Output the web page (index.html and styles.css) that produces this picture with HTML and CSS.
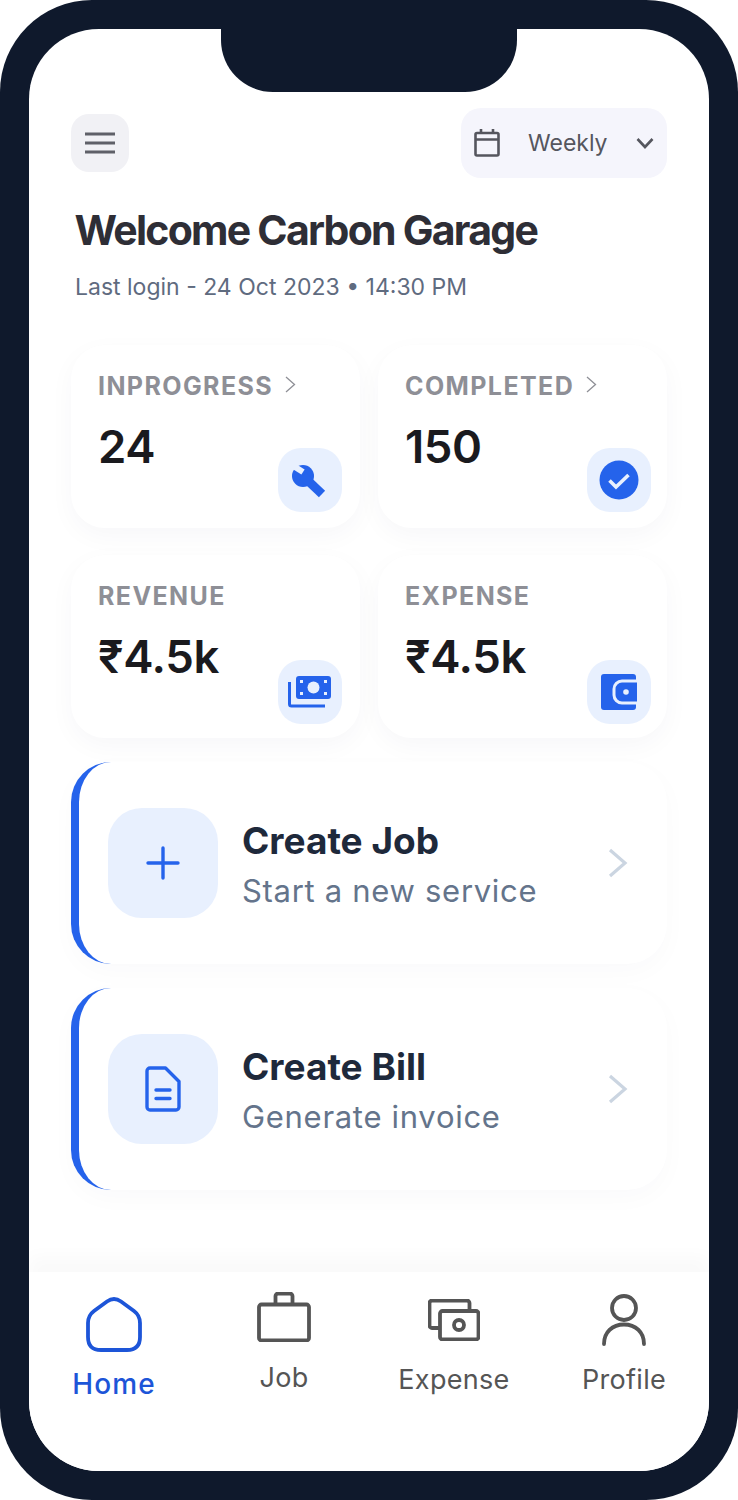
FILE: index.html
```html
<!DOCTYPE html>
<html lang="en">
<head>
    <meta charset="UTF-8">
    <meta name="viewport" content="width=device-width, initial-scale=1.0">
    <title>Carbon Garage</title>
    <link rel="stylesheet" href="styles.css">
</head>
<body>
    <div class="phone">
        <div class="notch"></div>
        <div class="screen">
            <main class="content">
                <div class="topbar">
                    <button class="menu-btn">
                        <svg width="32" height="24" viewBox="0 0 32 24"><path d="M1 3h30M1 12h30M1 21h30" fill="none" stroke="#5f6068" stroke-width="3.200"/></svg>
                    </button>
                    <div class="range-select">
                        <svg width="26" height="28" viewBox="0 0 26 28" fill="none" stroke="#55565e" stroke-width="2.600"><rect x="1.500" y="4" width="23" height="22.500" rx="1.500"/><path d="M1.500 10.500h23M7 0v5M19 0v5"/></svg>
                        <span class="range-label">Weekly</span>
                        <svg width="18" height="12" viewBox="0 0 18 12" fill="none" stroke="#55565e" stroke-width="2.600"><path d="M1.500 2l7.500 8 7.500-8"/></svg>
                    </div>
                </div>

                <h1 class="welcome">Welcome Carbon Garage</h1>
                <p class="last-login">Last login - 24 Oct 2023 • 14:30 PM</p>

                <div class="stats">
                    <div class="stat-card">
                        <div class="stat-label">INPROGRESS
                            <svg class="stat-arrow" width="11" height="17" viewBox="0 0 11 17" fill="none" stroke="#8e8f96" stroke-width="1.300"><path d="M1 1l8.500 7.500L1 16"/></svg>
                        </div>
                        <div class="stat-value">24</div>
                        <div class="stat-icon">
                            <svg width="38" height="38" viewBox="0 0 38 38"><circle cx="12" cy="15" r="11" fill="#2563eb"/><path d="M12 15l19 18" stroke="#2563eb" stroke-width="9"/><path d="M1 4l11 7" stroke="#e8f0fe" stroke-width="6"/></svg>
                        </div>
                    </div>
                    <div class="stat-card">
                        <div class="stat-label">COMPLETED
                            <svg class="stat-arrow" width="11" height="17" viewBox="0 0 11 17" fill="none" stroke="#8e8f96" stroke-width="1.300"><path d="M1 1l8.500 7.500L1 16"/></svg>
                        </div>
                        <div class="stat-value">150</div>
                        <div class="stat-icon">
                            <svg width="40" height="40" viewBox="0 0 40 40"><circle cx="20" cy="20" r="19.500" fill="#2563eb"/><path d="M10.500 20.500l6.500 6.500 12.500-12" fill="none" stroke="#e8f0fe" stroke-width="3.600"/></svg>
                        </div>
                    </div>
                    <div class="stat-card">
                        <div class="stat-label">REVENUE</div>
                        <div class="stat-value">₹4.5k</div>
                        <div class="stat-icon">
                            <svg width="44" height="32" viewBox="0 0 44 32"><rect x="8" y="0" width="35" height="23" rx="3" fill="#2563eb"/><circle cx="25.500" cy="11.500" r="6" fill="#e8f0fe"/><path d="M12 4h3v3h-3zM36 4h3v3h-3zM12 16h3v3h-3zM36 16h3v3h-3z" fill="#e8f0fe"/><path d="M1.500 6v22a2 2 0 0 0 2 2h33.500" fill="none" stroke="#2563eb" stroke-width="3"/></svg>
                        </div>
                    </div>
                    <div class="stat-card">
                        <div class="stat-label">EXPENSE</div>
                        <div class="stat-value">₹4.5k</div>
                        <div class="stat-icon">
                            <svg width="36" height="36" viewBox="0 0 36 36"><rect x="0" y="0" width="35" height="36" rx="3" fill="#2563eb"/><path d="M36 7H21a8 8 0 0 0-8 8v6a8 8 0 0 0 8 8h15" fill="#2563eb" stroke="#e8f0fe" stroke-width="3"/><circle cx="25" cy="18" r="2.800" fill="#e8f0fe"/></svg>
                        </div>
                    </div>
                </div>

                <div class="action-card">
                    <div class="action-icon">
                        <svg width="34" height="34" viewBox="0 0 34 34" fill="none" stroke="#2563eb" stroke-width="3.400" stroke-linecap="round"><path d="M17 2v30M2 17h30"/></svg>
                    </div>
                    <div class="action-text">
                        <div class="action-title">Create Job</div>
                        <div class="action-sub">Start a new service</div>
                    </div>
                    <svg class="action-arrow" width="20" height="30" viewBox="0 0 20 30" fill="none" stroke="#cbd5e1" stroke-width="3.200"><path d="M2 2l15 13L2 28"/></svg>
                </div>

                <div class="action-card">
                    <div class="action-icon">
                        <svg width="36" height="46" viewBox="0 0 36 46" fill="none" stroke="#2563eb" stroke-width="3.400" stroke-linecap="round" stroke-linejoin="round"><path d="M5 2h15.500L34 15.500V41a3 3 0 0 1-3 3H5a3 3 0 0 1-3-3V5a3 3 0 0 1 3-3z"/><path d="M11 24h14M11 32.500h14"/></svg>
                    </div>
                    <div class="action-text">
                        <div class="action-title">Create Bill</div>
                        <div class="action-sub">Generate invoice</div>
                    </div>
                    <svg class="action-arrow" width="20" height="30" viewBox="0 0 20 30" fill="none" stroke="#cbd5e1" stroke-width="3.200"><path d="M2 2l15 13L2 28"/></svg>
                </div>
            </main>

            <nav class="tabbar">
                <div class="tab tab-home active">
                    <svg width="56" height="56" viewBox="0 0 56 56" fill="none" stroke="#1d55d8" stroke-width="3.800"><path d="M21 5.500Q28 .5 35 5.500L48 15Q54 19.500 54 27V41Q54 54 41 54H15Q2 54 2 41V27Q2 19.500 8 15Z"/></svg>
                    <span>Home</span>
                </div>
                <div class="tab tab-job">
                    <svg width="54" height="50" viewBox="0 0 54 50" fill="none" stroke="#555" stroke-width="3.800" stroke-linejoin="round"><rect x="2" y="12.500" width="50" height="36" rx="2.500"/><path d="M18.500 12V4a2.500 2.500 0 0 1 2.500-2.500h12A2.500 2.500 0 0 1 35.500 4v8"/></svg>
                    <span>Job</span>
                </div>
                <div class="tab tab-expense">
                    <svg width="52" height="42" viewBox="0 0 52 42" fill="none" stroke="#555" stroke-width="3.800" stroke-linejoin="round"><path d="M12 29H4a2.500 2.500 0 0 1-2.500-2.500V4A2.500 2.500 0 0 1 4 1.500h35A2.500 2.500 0 0 1 41.500 4v8"/><rect x="12" y="12" width="38.500" height="28.500" rx="2.500"/><circle cx="31" cy="26" r="5"/></svg>
                    <span>Expense</span>
                </div>
                <div class="tab tab-profile">
                    <svg width="46" height="52" viewBox="0 0 46 52" fill="none" stroke="#555" stroke-width="3.800" stroke-linecap="round"><circle cx="23" cy="14" r="12"/><path d="M3 50c0-12 8.500-19.500 20-19.500S43 38 43 50"/></svg>
                    <span>Profile</span>
                </div>
            </nav>
        </div>
    </div>
</body>
</html>
```

FILE: styles.css
```css
* {
    box-sizing: border-box;
}

body {
    margin: 0;
    background: #fff;
    font-family: Inter, "Liberation Sans", sans-serif;
}

.phone {
    position: relative;
    width: 738px;
    height: 1500px;
    padding: 29px;
    background: #0f192c;
    border-radius: 92px;
}

.notch {
    position: absolute;
    top: 0;
    left: 221px;
    width: 296px;
    height: 92px;
    background: #0f192c;
    border-radius: 0 0 52px 52px;
}

.screen {
    display: flex;
    flex-direction: column;
    height: 100%;
    background: #fff;
    border-radius: 70px;
    overflow: hidden;
}

.content {
    flex: 1;
    padding: 79px 42px 0;
}

.topbar {
    display: flex;
    justify-content: space-between;
    align-items: center;
}

.menu-btn {
    display: flex;
    justify-content: center;
    align-items: center;
    width: 58px;
    height: 58px;
    padding: 0;
    background: #f1f1f5;
    border: none;
    border-radius: 18px;
}

.range-select {
    display: flex;
    align-items: center;
    width: 206px;
    height: 70px;
    padding: 0 13px;
    background: #f5f5fc;
    border-radius: 20px;
}

.range-label {
    flex: 1;
    margin-left: 28px;
    font-size: 23px;
    color: #55565e;
}

.welcome {
    margin: 27px 0 0 3.500px;
    font-size: 41px;
    font-weight: 700;
    line-height: 50px;
    letter-spacing: -1.750px;
    color: #2e2e36;
}

.last-login {
    margin: 17px 0 0 4px;
    font-size: 23px;
    font-weight: 400;
    line-height: 30px;
    color: #5f6b7f;
}

.stats {
    display: grid;
    grid-template-columns: 289px 289px;
    grid-auto-rows: 183px;
    gap: 27px 18px;
    margin: 43px 0 24px;
}

.stat-card {
    position: relative;
    padding: 26px 27px;
    background: #fff;
    border-radius: 34px;
    box-shadow: 0 8px 26px rgba(30, 41, 80, 0.035);
}

.stat-label {
    display: flex;
    align-items: center;
    gap: 12px;
    font-size: 25px;
    font-weight: 700;
    line-height: 30px;
    letter-spacing: 1.400px;
    color: #8e8f96;
}

.stat-arrow {
    margin-top: -4px;
}

.stat-value {
    margin-top: 18px;
    font-size: 45.500px;
    font-weight: 600;
    line-height: 56px;
    letter-spacing: -0.400px;
    color: #1a1a1e;
}

.stat-icon {
    position: absolute;
    right: 18px;
    bottom: 16px;
    display: flex;
    justify-content: center;
    align-items: center;
    width: 64px;
    height: 64px;
    background: #e8f0fe;
    border-radius: 23px;
}

.stat-card:nth-child(even) .stat-icon {
    right: 16px;
}

.stat-card:nth-child(n+3) .stat-icon {
    bottom: 14px;
}

.action-card {
    display: flex;
    align-items: center;
    height: 202px;
    margin-bottom: 24px;
    padding: 0 39px 0 29px;
    background: #fff;
    border-left: 8px solid #2563eb;
    border-radius: 40px;
    box-shadow: 0 8px 26px rgba(30, 41, 80, 0.025);
}

.action-icon {
    display: flex;
    justify-content: center;
    align-items: center;
    flex-shrink: 0;
    width: 110px;
    height: 110px;
    background: #e8f0fe;
    border-radius: 34px;
}

.action-text {
    flex: 1;
    margin-left: 24px;
    padding-top: 3px;
}

.action-title {
    font-size: 37px;
    font-weight: 700;
    line-height: 46px;
    color: #1e293b;
}

.action-sub {
    margin-top: 7px;
    font-size: 31px;
    line-height: 40px;
    letter-spacing: 0.700px;
    color: #64748b;
}

.tabbar {
    position: relative;
    display: grid;
    grid-template-columns: repeat(4, 170px);
    height: 199px;
    background: #fff;
    box-shadow: 0 -16px 16px rgba(0, 0, 0, 0.025);
}

.tab {
    display: flex;
    flex-direction: column;
    align-items: center;
    font-size: 27px;
    letter-spacing: 0.300px;
    color: #555;
}

.tab-home {
    padding-top: 24px;
    gap: 15px;
}

.tab-job {
    padding-top: 20px;
    gap: 19px;
}

.tab-expense {
    padding-top: 27px;
    gap: 22px;
}

.tab-profile {
    padding-top: 22px;
    gap: 17px;
}

.tab.active {
    font-size: 28px;
    font-weight: 500;
    letter-spacing: 1.100px;
    color: #1d55d8;
}
```
